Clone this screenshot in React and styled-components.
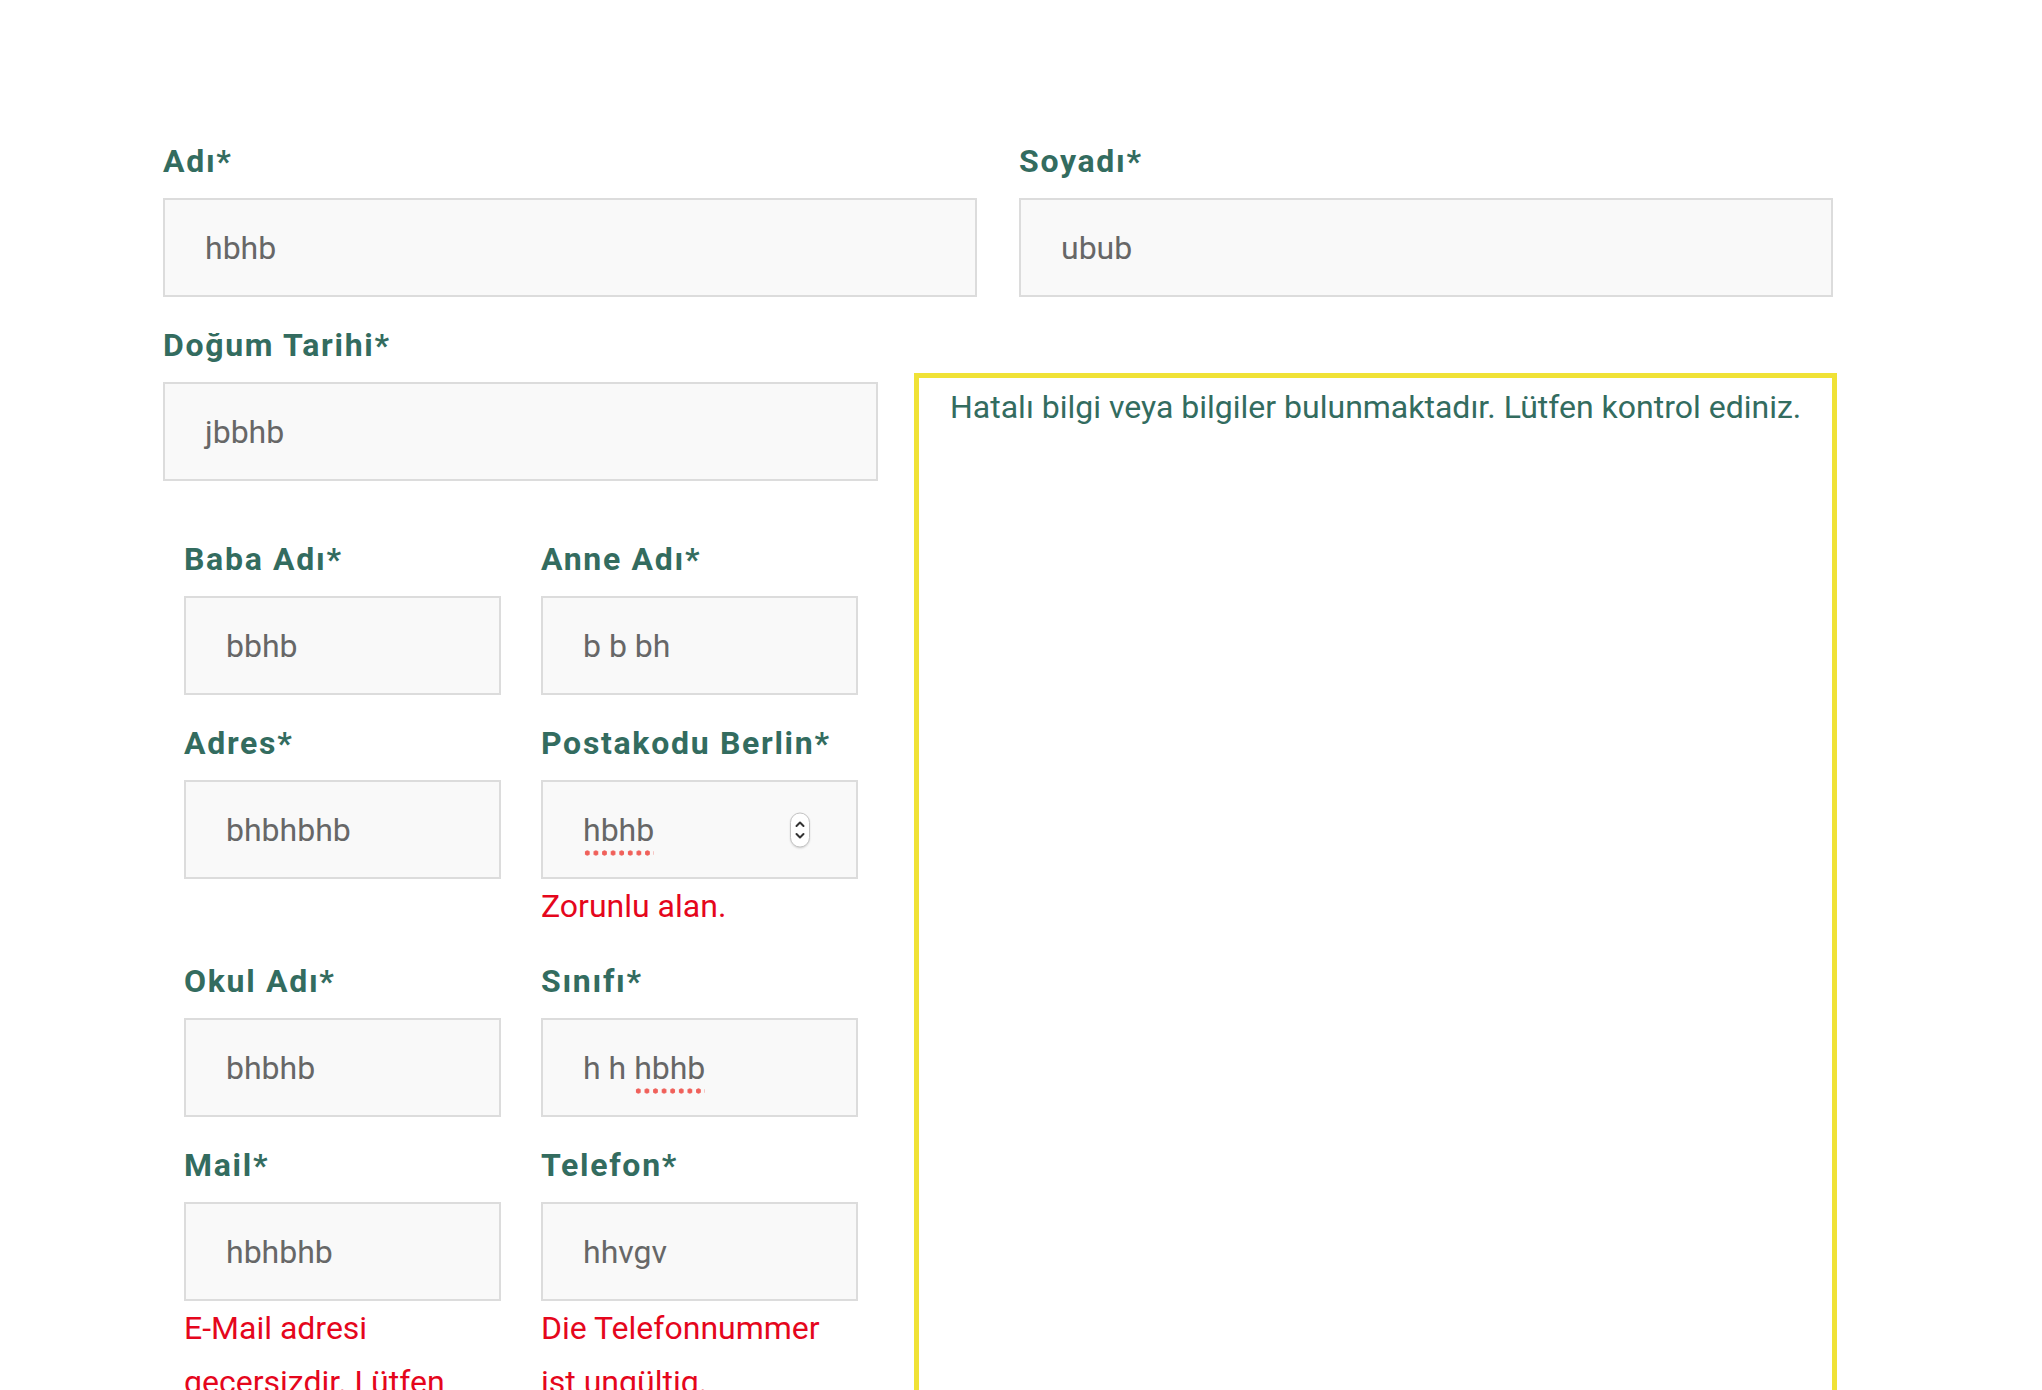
import React from "react";
import styled, { createGlobalStyle } from "styled-components";

const GlobalStyle = createGlobalStyle`
  html, body {
    margin: 0;
    padding: 0;
    background: #ffffff;
  }
  body {
    font-family: Roboto, "Liberation Sans", Arial, sans-serif;
  }
`;

const Page = styled.div`
  padding: 141px 0 0 163px;
`;

const TopRow = styled.div`
  display: grid;
  grid-template-columns: 814px 814px;
  column-gap: 42px;
`;

const MainRow = styled.div`
  display: grid;
  grid-template-columns: 715px 923px;
  column-gap: 36px;
`;

const LeftCol = styled.div`
  display: flex;
  flex-direction: column;
`;

const SubGrid = styled.div`
  display: grid;
  grid-template-columns: 317px 317px;
  column-gap: 40px;
  padding: 30px 20px 0 21px;
  align-items: start;
`;

const FieldWrap = styled.div`
  display: flex;
  flex-direction: column;
  margin-bottom: 28px;
`;

const Label = styled.label`
  display: block;
  font-size: 32px;
  line-height: 40px;
  font-weight: 700;
  letter-spacing: 1.7px;
  color: #336c5f;
  margin-bottom: 17px;
`;

const InputBox = styled.div`
  position: relative;
  box-sizing: border-box;
  height: 99px;
  border: 2px solid #dcdcdc;
  background: #f9f9f9;
  display: flex;
  align-items: center;
  padding: 0 40px;
  font-size: 32px;
  color: #676767;
  white-space: pre;
`;

const Misspelled = styled.span`
  padding-bottom: 7px;
  margin-bottom: -7px;
  background-image: radial-gradient(circle, #f0615b 2.3px, transparent 2.9px);
  background-size: 8.6px 6px;
  background-repeat: repeat-x;
  background-position: left bottom;
`;

const Spinner = styled.span`
  position: absolute;
  right: 46px;
  top: 50%;
  transform: translateY(-50%);
  width: 20px;
  height: 35px;
  box-sizing: border-box;
  border: 1px solid #c4c4c4;
  border-radius: 10px;
  background: #ffffff;
  box-shadow: 0 1px 2px rgba(0, 0, 0, 0.14);
  display: flex;
  align-items: center;
  justify-content: center;
`;

const ErrorText = styled.div`
  font-size: 32px;
  line-height: 54px;
  color: #e5061c;
`;

const Notice = styled.div`
  margin-top: 48px;
  border: 5px solid #f0e236;
  padding: 7px 16px 7px 31px;
  font-size: 32px;
  line-height: 45px;
  color: #336c5f;
`;

const SpinIcon = () => (
  <svg width="12" height="25" viewBox="0 0 12 25" fill="none">
    <path d="M2.5 8.5 L6 5 L9.5 8.5" stroke="#333" strokeWidth="2" strokeLinecap="round" strokeLinejoin="round" />
    <path d="M2.5 16.5 L6 20 L9.5 16.5" stroke="#333" strokeWidth="2" strokeLinecap="round" strokeLinejoin="round" />
  </svg>
);

const Field = ({ label, children, error, spinner }) => (
  <FieldWrap>
    <Label>{label}</Label>
    <InputBox>
      {children}
      {spinner && (
        <Spinner>
          <SpinIcon />
        </Spinner>
      )}
    </InputBox>
    {error && <ErrorText>{error}</ErrorText>}
  </FieldWrap>
);

export default function App() {
  return (
    <Page>
      <GlobalStyle />
      <TopRow>
        <Field label="Adı*">hbhb</Field>
        <Field label="Soyadı*">ubub</Field>
      </TopRow>
      <MainRow>
        <LeftCol>
          <Field label="Doğum Tarihi*">jbbhb</Field>
          <SubGrid>
            <Field label="Baba Adı*">bbhb</Field>
            <Field label="Anne Adı*">b b bh</Field>
            <Field label="Adres*">bhbhbhb</Field>
            <Field label="Postakodu Berlin*" error="Zorunlu alan." spinner>
              <Misspelled>hbhb</Misspelled>
            </Field>
            <Field label="Okul Adı*">bhbhb</Field>
            <Field label="Sınıfı*">
              {"h h "}
              <Misspelled>hbhb</Misspelled>
            </Field>
            <Field label="Mail*" error="E-Mail adresi gecersizdir. Lütfen kontrol ediniz.">
              hbhbhb
            </Field>
            <Field label="Telefon*" error="Die Telefonnummer ist ungültig.">
              hhvgv
            </Field>
          </SubGrid>
        </LeftCol>
        <Notice>Hatalı bilgi veya bilgiler bulunmaktadır. Lütfen kontrol ediniz.</Notice>
      </MainRow>
    </Page>
  );
}
